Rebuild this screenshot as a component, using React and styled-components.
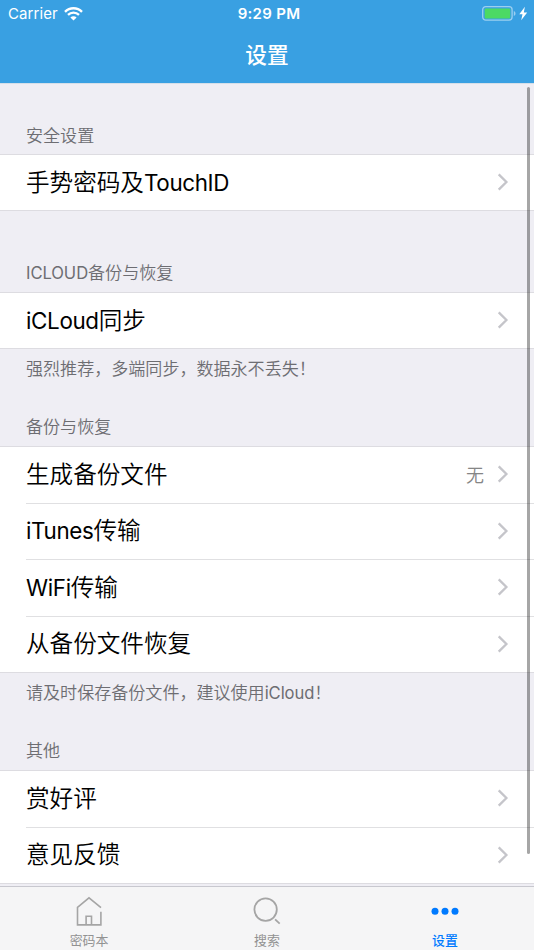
import React from 'react';
import styled, { createGlobalStyle } from 'styled-components';

const Global = createGlobalStyle`
  html, body { margin: 0; padding: 0; }
  body { font-family: Inter, "Noto Sans CJK SC", sans-serif; }
`;

const Screen = styled.div`
  position: relative;
  display: flex;
  flex-direction: column;
  width: 534px;
  height: 950px;
  overflow: hidden;
  background: #efeef4;
`;

const Header = styled.header`
  box-sizing: border-box;
  flex: none;
  height: 84px;
  background: #39a0e2;
  border-bottom: 1px solid #d5dfe9;
  color: #fff;
`;

const StatusBar = styled.div`
  display: grid;
  grid-template-columns: 1fr auto 1fr;
  align-items: center;
  height: 27px;
  padding: 0 6px 0 8px;
`;

const Carrier = styled.div`
  display: flex;
  align-items: center;
  gap: 6px;
  font-size: 15px;
  letter-spacing: 0.1px;
`;

const Clock = styled.div`
  font-size: 15px;
  font-weight: 600;
  letter-spacing: 0.3px;
  padding-left: 2px;
`;

const Power = styled.div`
  display: flex;
  justify-content: flex-end;
`;

const Title = styled.h1`
  margin: 0;
  height: 56px;
  line-height: 56px;
  text-align: center;
  font-size: 21.7px;
  font-weight: 500;
`;

const Content = styled.main`
  flex: 1;
  min-height: 0;
  overflow: hidden;
`;

const Caption = styled.div`
  display: flex;
  flex-direction: column;
  justify-content: space-between;
  box-sizing: border-box;
  height: ${(p) => p.$height}px;
  padding: 7px 26px ${(p) => (p.$low ? 6 : 7)}px;
  color: #6d6d72;
  font-size: 17.06px;
  font-weight: 350;
  line-height: 25px;
`;

const Note = styled.div`
  white-space: nowrap;
`;

const Heading = styled.div`
  margin-top: auto;
`;

const Latin = styled.span`
  font-size: ${(p) => p.$size}px;
  font-weight: 400;
  letter-spacing: ${(p) => p.$track}px;
`;

const List = styled.section`
  box-sizing: border-box;
  display: flex;
  flex-direction: column;
  height: ${(p) => p.$height}px;
  padding-left: 26px;
  background: #fff;
  border-top: 1px solid #dddce1;
  border-bottom: 1px solid #dddce1;
`;

const Row = styled.div`
  box-sizing: border-box;
  flex: 1;
  display: flex;
  align-items: center;
  padding-right: 25px;
  color: #000;
  font-size: 23.6px;
  font-weight: 350;
  line-height: 34px;
  &:not(:last-child) { border-bottom: 1px solid #e0e0e2; }

  & > svg { margin-bottom: 1px; }
`;

const Label = styled.div`
  flex: 1;
`;

const Value = styled.div`
  margin: 3px 13px 0 0;
  color: #858585;
  font-size: 18px;
`;

const ScrollThumb = styled.div`
  position: absolute;
  top: 87px;
  left: 527px;
  width: 3px;
  height: 767px;
  border-radius: 2px;
  background: rgba(0, 0, 0, 0.35);
`;

const TabBar = styled.nav`
  box-sizing: border-box;
  flex: none;
  display: grid;
  grid-template-columns: repeat(3, 1fr);
  height: 64px;
  background: #f5f5f6;
  border-top: 1px solid #c8c8cf;
`;

const Tab = styled.div`
  display: flex;
  flex-direction: column;
  align-items: center;
  padding-top: 8px;
  color: ${(p) => (p.$active ? '#007aff' : '#929292')};
  font-size: 12.9px;
  font-weight: ${(p) => (p.$active ? 500 : 400)};
  line-height: 18px;
`;

const TabIcon = styled.svg`
  display: block;
  width: 32px;
  height: 32px;
  margin-bottom: 5px;
`;

const Wifi = () => (
  <svg width="19" height="14" viewBox="0 0 19 14" fill="none" stroke="#fff">
    <path d="M1 4.8A12 12 0 0 1 18 4.8" strokeWidth="2.4" />
    <path d="M4 7.9a7.8 7.8 0 0 1 11 0" strokeWidth="2.3" />
    <path d="M9.5 13.6 6.4 10.6a4.4 4.4 0 0 1 6.2 0z" fill="#fff" stroke="none" />
  </svg>
);

const Battery = () => (
  <svg width="46" height="15" viewBox="0 0 46 15">
    <rect x="0.7" y="0.7" width="29.4" height="13.4" rx="3" fill="none" stroke="#9bcff0" strokeWidth="1.3" />
    <rect x="2.7" y="2.6" width="25.5" height="9.8" rx="1" fill="#4cd964" />
    <path d="M31.8 5v5c2.3-.9 2.3-4.1 0-5z" fill="#9bcff0" />
    <path d="M42.9 .8 37.3 8.3h3.2l-1.3 6 6-7.9h-3.4z" fill="#fff" />
  </svg>
);

const Chevron = () => (
  <svg width="12" height="18" viewBox="0 0 12 18" fill="none" stroke="#c5c5ca" strokeWidth="2.3">
    <path d="M1.7 1.4 9.4 9l-7.7 7.6" />
  </svg>
);

const Mixed = ({ children, size, track }) =>
  children.split(/([A-Za-z]+)/).filter(Boolean).map((part, i) =>
    /[A-Za-z]/.test(part) ? <Latin key={i} $size={size} $track={track}>{part}</Latin> : part
  );

const Small = ({ children }) => <Mixed size={16.6} track={-0.08}>{children}</Mixed>;

const groups = [
  { space: 70, heading: '安全设置', height: 57, rows: [['手势密码及TouchID']] },
  { space: 81, heading: 'ICLOUD备份与恢复', height: 57, rows: [['iCLoud同步']] },
  {
    space: 97,
    note: '强烈推荐，多端同步，数据永不丢失！',
    heading: '备份与恢复',
    height: 227,
    rows: [['生成备份文件', '无'], ['iTunes传输'], ['WiFi传输'], ['从备份文件恢复']],
  },
  {
    space: 97,
    note: '请及时保存备份文件，建议使用iCloud！',
    heading: '其他',
    height: 114,
    rows: [['赏好评'], ['意见反馈']],
  },
];

export default function App() {
  return (
    <Screen>
      <Global />
      <Header>
        <StatusBar>
          <Carrier>Carrier <Wifi /></Carrier>
          <Clock>9:29 PM</Clock>
          <Power><Battery /></Power>
        </StatusBar>
        <Title>设置</Title>
      </Header>
      <Content>
        {groups.map((g) => (
          <React.Fragment key={g.heading}>
            <Caption $height={g.space} $low={!g.note}>
              {g.note && <Note><Small>{g.note}</Small></Note>}
              <Heading><Small>{g.heading}</Small></Heading>
            </Caption>
            <List $height={g.height}>
              {g.rows.map(([label, value]) => (
                <Row key={label}>
                  <Label><Mixed size={22.4} track={-0.35}>{label}</Mixed></Label>
                  {value && <Value>{value}</Value>}
                  <Chevron />
                </Row>
              ))}
            </List>
          </React.Fragment>
        ))}
      </Content>
      <TabBar>
        <Tab>
          <TabIcon viewBox="0 0 32 32" fill="none" stroke="#a5a5a5" strokeWidth="1.6">
            <path d="M28 12.6 16 2.9 4.5 12.4v17.5h23.4V16.8" />
            <path d="M13.1 29.8V21.2h5.4v8.6" />
          </TabIcon>
          密码本
        </Tab>
        <Tab>
          <TabIcon viewBox="0 0 32 32" fill="none" stroke="#a5a5a5" strokeWidth="1.8">
            <circle cx="14.6" cy="14.6" r="11.2" />
            <path d="m24.1 24.4 4.6 4.2" />
          </TabIcon>
          搜索
        </Tab>
        <Tab $active>
          <TabIcon viewBox="0 0 32 32" fill="#007aff">
            <circle cx="6" cy="16.3" r="3.5" />
            <circle cx="16" cy="16.3" r="3.5" />
            <circle cx="26" cy="16.3" r="3.5" />
          </TabIcon>
          设置
        </Tab>
      </TabBar>
      <ScrollThumb />
    </Screen>
  );
}
